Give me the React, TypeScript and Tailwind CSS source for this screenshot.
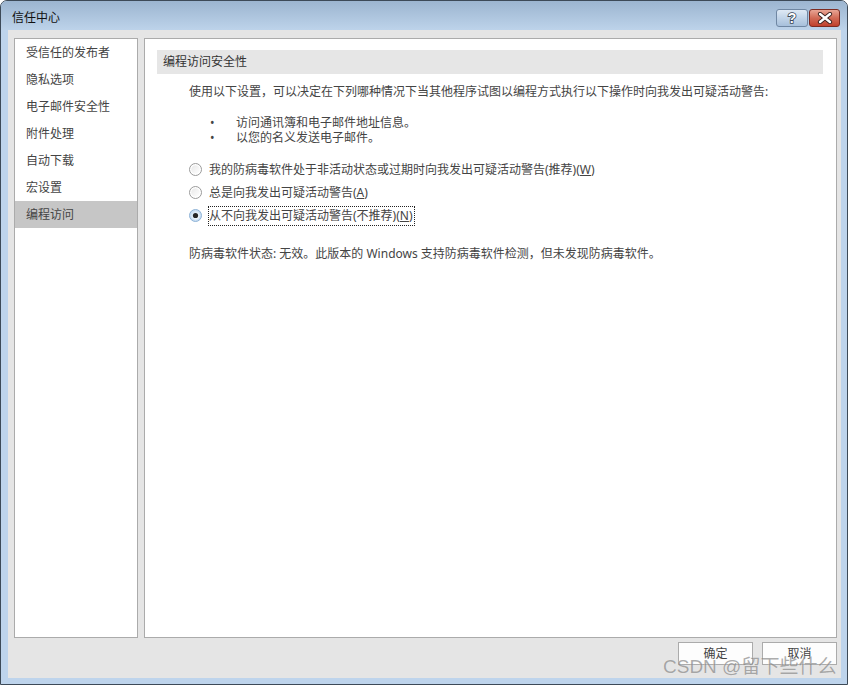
import React from "react";

const FONT = "font-['Noto_Sans','Noto_Sans_CJK_SC',sans-serif]";

function Radio({ checked }: { checked?: boolean }) {
  return (
    <svg width="13" height="13" viewBox="0 0 13 13" className="shrink-0">
      <defs>
        <linearGradient id={checked ? "rgc" : "rgu"} x1="0" y1="0" x2="1" y2="1">
          <stop offset="0" stopColor={checked ? "#cfe3f5" : "#e8e8e8"} />
          <stop offset="1" stopColor={checked ? "#f4f9fd" : "#ffffff"} />
        </linearGradient>
      </defs>
      <circle cx="6.5" cy="6.5" r="6" fill={checked ? "#c9def3" : "#ffffff"} stroke={checked ? "#8fb3d6" : "#9a9a9a"} strokeWidth="1" />
      <circle cx="6.5" cy="6.5" r="4.3" fill={`url(#${checked ? "rgc" : "rgu"})`} />
      {checked && <circle cx="6.5" cy="6.5" r="2.6" fill="#262626" />}
    </svg>
  );
}

function HelpBtn() {
  return (
    <div className="w-[32px] h-[18px] rounded-[3px] border border-[#6f87a3] bg-gradient-to-b from-[#dfe9f4] via-[#c1d4e8] to-[#a7c0db] flex items-center justify-center">
      <svg width="14" height="16" viewBox="0 0 14 16">
        <text
          x="7"
          y="13"
          textAnchor="middle"
          fontFamily="Liberation Sans, sans-serif"
          fontWeight="bold"
          fontSize="14"
          fill="#ffffff"
          stroke="#3a4656"
          strokeWidth="1.6"
          paintOrder="stroke"
        >
          ?
        </text>
      </svg>
    </div>
  );
}

function CloseBtn() {
  return (
    <div className="w-[31px] h-[18px] rounded-[3px] border border-[#7d2c22] bg-gradient-to-b from-[#e8a595] via-[#d16a56] to-[#c0402c] flex items-center justify-center">
      <svg width="16" height="12" viewBox="0 0 16 12">
        <path d="M3 2 L13 10 M13 2 L3 10" stroke="#3b2320" strokeWidth="4.2" strokeLinecap="round" />
        <path d="M3 2 L13 10 M13 2 L3 10" stroke="#ffffff" strokeWidth="2.4" strokeLinecap="round" />
      </svg>
    </div>
  );
}

export default function App() {
  const items = ["受信任的发布者", "隐私选项", "电子邮件安全性", "附件处理", "自动下载", "宏设置", "编程访问"];
  return (
    <div className={`w-[850px] h-[685px] bg-white ${FONT} text-[12px]`}>
      <div className="relative w-[848px] h-[685px] border border-[#3d4a58] rounded-t-[7px] bg-[#bed4ec] flex flex-col overflow-hidden">
        {/* title bar */}
        <div className="h-[29px] shrink-0 bg-gradient-to-b from-[#9cb5d0] to-[#bdd3ea] flex items-start pl-[11px] pr-[7px]">
          <div className="mt-[8px] text-[12px] leading-[18px] text-[#111]">信任中心</div>
          <div className="ml-auto mt-[8px] flex gap-[1px]">
            <HelpBtn />
            <CloseBtn />
          </div>
        </div>
        {/* client */}
        <div className="flex-1 ml-[7px] mr-[6px] mb-[6px] bg-[#e5e5e5] flex flex-col pt-[8px] pl-[6px] pr-[4px]">
          <div className="flex gap-[6px] h-[600px]">
            {/* left list */}
            <div className="w-[124px] h-full border border-[#ababab] bg-white">
              {items.map((it, i) => (
                <div
                  key={it}
                  className={`h-[27px] flex items-center pl-[11px] leading-[16px] text-[#444] ${i === 6 ? "bg-[#c6c6c6]" : ""}`}
                >
                  {it}
                </div>
              ))}
            </div>
            {/* right panel */}
            <div className="w-[693px] h-full border border-[#ababab] bg-white text-[#444]">
              <div className="mt-[11px] ml-[12px] mr-[13px] h-[24px] bg-[#e6e6e6] flex items-center pl-[6px] text-[#333]">
                编程访问安全性
              </div>
              <div className="mt-[10px] pl-[44px] leading-[16px]">
                使用以下设置，可以决定在下列哪种情况下当其他程序试图以编程方式执行以下操作时向我发出可疑活动警告:
              </div>
              <div className="mt-[15px] leading-[15px]">
                <div className="flex h-[15px]">
                  <span className="w-[91px] pl-[65px]">•</span>
                  <span>访问通讯簿和电子邮件地址信息。</span>
                </div>
                <div className="flex h-[15px]">
                  <span className="w-[91px] pl-[65px]">•</span>
                  <span>以您的名义发送电子邮件。</span>
                </div>
              </div>
              <div className="mt-[13px] pl-[44px]">
                <div className="h-[23px] flex items-center">
                  <Radio />
                  <span className="ml-[7px] leading-[16px]">
                    我的防病毒软件处于非活动状态或过期时向我发出可疑活动警告(推荐)(<span className="underline">W</span>)
                  </span>
                </div>
                <div className="h-[23px] flex items-center">
                  <Radio />
                  <span className="ml-[7px] leading-[16px]">
                    总是向我发出可疑活动警告(<span className="underline">A</span>)
                  </span>
                </div>
                <div className="h-[23px] flex items-center">
                  <Radio checked />
                  <span className="ml-[6px] h-[20px] flex items-center pr-[1px] border border-dotted border-[#222] leading-[16px]">
                    <span>
                      从不向我发出可疑活动警告(不推荐)(<span className="underline">N</span>)
                    </span>
                  </span>
                </div>
              </div>
              <div className="mt-[19px] pl-[44px] leading-[16px]">
                防病毒软件状态: 无效。此版本的 Windows 支持防病毒软件检测，但未发现防病毒软件。
              </div>
            </div>
          </div>
          {/* buttons */}
          <div className="mt-[4px] flex justify-end gap-[9px]">
            <button className="w-[75px] h-[23px] border border-[#ababab] bg-[#fdfdfd] text-[#444] text-[12px] leading-[16px]">确定</button>
            <button className="w-[75px] h-[23px] border border-[#ababab] bg-[#fdfdfd] text-[#444] text-[12px] leading-[16px]">取消</button>
          </div>
        </div>
        {/* watermark */}
        <div className="absolute left-[662px] top-[655px] text-[19px] leading-[22px] text-[#8a8a8a] opacity-70 font-['Liberation_Sans','Noto_Sans_CJK_SC',sans-serif] [text-shadow:0_0_1px_#fff]">
          CSDN @留下些什么
        </div>
      </div>
    </div>
  );
}
